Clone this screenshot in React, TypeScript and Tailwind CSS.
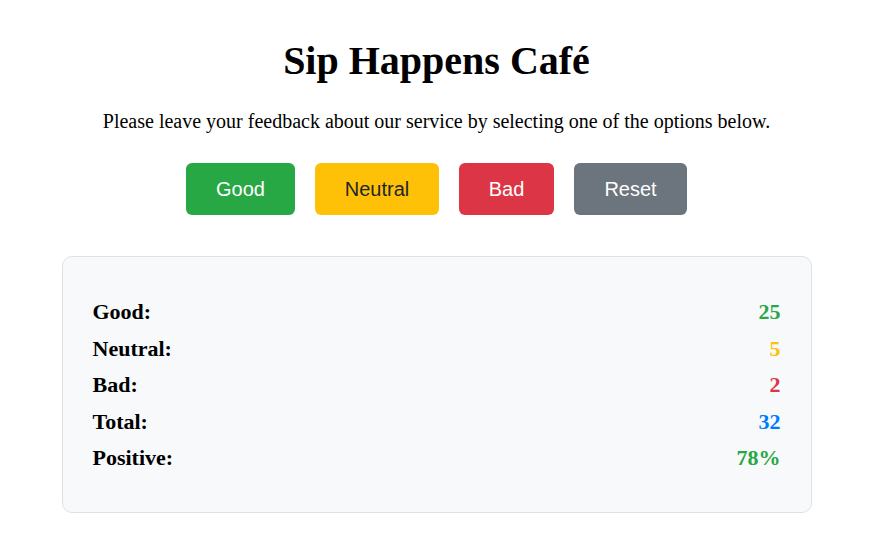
import React from "react";

const rows = [
  { label: "Good:", value: "25", color: "text-[#28a745]" },
  { label: "Neutral:", value: "5", color: "text-[#ffc107]" },
  { label: "Bad:", value: "2", color: "text-[#dc3545]" },
  { label: "Total:", value: "32", color: "text-[#007bff]" },
  { label: "Positive:", value: "78%", color: "text-[#28a745]" },
];

export default function App() {
  return (
    <div className="min-h-[547px] w-full bg-white text-black" style={{ fontFamily: '"Liberation Serif", "Times New Roman", serif' }}>
      <div className="flex w-[873px] flex-col items-center pt-[38px]">
        <h1 className="text-[40px] font-bold leading-[46px]">Sip Happens Café</h1>
        <p className="mt-[26px] text-[20px] leading-[23px]">
          Please leave your feedback about our service by selecting one of the options below.
        </p>
        <div className="mt-[30px] flex gap-[20px]" style={{ fontFamily: '"Liberation Sans", Arial, sans-serif' }}>
          <button className="h-[52px] w-[109px] rounded-md bg-[#28a745] text-[20px] text-white">Good</button>
          <button className="h-[52px] w-[124px] rounded-md bg-[#ffc107] text-[20px] text-[#212529]">Neutral</button>
          <button className="h-[52px] w-[95px] rounded-md bg-[#dc3545] text-[20px] text-white">Bad</button>
          <button className="h-[52px] w-[113px] rounded-md bg-[#6c757d] text-[20px] text-white">Reset</button>
        </div>
        <div className="mt-[41px] flex w-[750px] flex-col gap-[11.5px] rounded-[10px] border border-[#dee2e6] bg-[#f8f9fa] px-[30px] pt-[42px] pb-[42px]">
          {rows.map((r) => (
            <div key={r.label} className="flex justify-between text-[22px] font-bold leading-[25px]">
              <span>{r.label}</span>
              <span className={r.color}>{r.value}</span>
            </div>
          ))}
        </div>
      </div>
    </div>
  );
}
